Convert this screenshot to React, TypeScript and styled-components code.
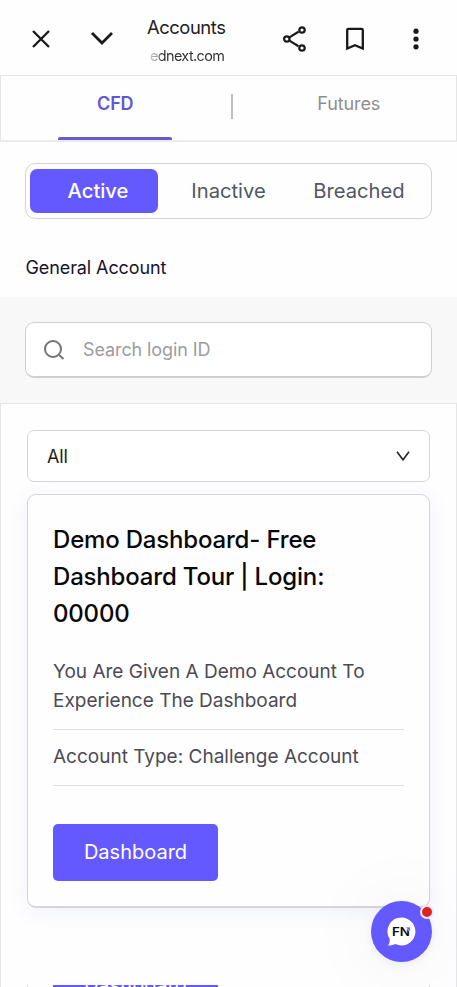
import React from "react";
import styled, { createGlobalStyle } from "styled-components";

const GlobalStyle = createGlobalStyle`
  * { box-sizing: border-box; }
  body {
    margin: 0;
    background: #fff;
    font-family: Inter, "Liberation Sans", sans-serif;
    overflow: hidden;
  }
  button { font-family: inherit; border: 0; padding: 0; background: none; }
`;

const Screen = styled.div`
  position: relative;
  width: 457px;
  height: 987px;
  overflow: hidden;
  display: flex;
  flex-direction: column;
  background: #fefefe;
`;

const BrowserBar = styled.header`
  flex: none;
  height: 75px;
  display: grid;
  grid-template-columns: 81px 41px 144px 57px 64px 58px 12px;
  align-items: center;
`;

const IconButton = styled.button`
  display: flex;
  justify-content: center;
  padding-top: 3px;
`;

const PageInfo = styled.div`
  display: flex;
  flex-direction: column;
  padding-left: 25px;
  white-space: nowrap;
  color: #222226;
`;

const PageTitle = styled.span`
  font-size: 18.4px;
  line-height: 28px;
  margin-top: 7px;
  letter-spacing: -0.45px;
`;

const PageUrl = styled.span`
  align-self: flex-start;
  font-size: 14.4px;
  line-height: 28px;
  margin-top: 1px;
  margin-left: 3px;
  letter-spacing: -0.6px;
  background: linear-gradient(90deg, #c8c8c8 0, #98989a 7px, #303034 12px);
  background-clip: text;
  color: transparent;
`;

const Tabs = styled.nav`
  flex: none;
  height: 67px;
  display: grid;
  grid-template-columns: 1fr 2px 1fr;
  border: 1px solid #e5e5e7;
  border-bottom: 2px solid #ebebed;
`;

const Tab = styled.button<{ $active?: boolean }>`
  display: flex;
  flex-direction: column;
  align-items: center;
  justify-content: space-between;
  font-size: 18px;
  line-height: 24px;
  padding-top: 16px;
  letter-spacing: ${(p) => (p.$active ? "-0.1px" : "-0.1px")};
  padding-left: ${(p) => (p.$active ? "2px" : "12px")};
  font-weight: ${(p) => (p.$active ? 600 : 400)};
  color: ${(p) => (p.$active ? "#6156d6" : "#8e8e90")};
`;

const TabLine = styled.span`
  width: 114px;
  height: 3px;
  border-radius: 2px 2px 0 0;
  background: #685bd0;
`;

const TabDivider = styled.span`
  height: 25px;
  margin: 18px 0 0 3px;
  width: 2px;
  background: #bdbdc0;
`;

const StatusSwitch = styled.div`
  flex: none;
  height: 56px;
  margin: 21px 25px 0;
  padding: 5px 4px;
  display: grid;
  grid-template-columns: 128px 1fr 136px;
  border: 1px solid #d2d2d8;
  border-radius: 10px;
`;

const StatusOption = styled.button<{ $active?: boolean }>`
  font-size: 20.2px;
  line-height: 42px;
  border-radius: 7px;
  padding-left: ${(p) => (p.$active ? "8px" : "0")};
  &:nth-child(2) { padding-left: 8px; }
  font-weight: ${(p) => (p.$active ? 500 : 400)};
  color: ${(p) => (p.$active ? "#fff" : "#54575f")};
  background: ${(p) => (p.$active ? "#6459ff" : "transparent")};
`;

const SectionTitle = styled.h2`
  flex: none;
  margin: 35px 0 0 25.5px;
  height: 43px;
  font-size: 18px;
  line-height: 28px;
  letter-spacing: -0.1px;
  font-weight: 400;
  color: #15142a;
`;

const SearchArea = styled.section`
  flex: none;
  height: 106px;
  padding: 25px 25px 0;
  background: #f8f8f8;
`;

const SearchBox = styled.label`
  height: 56px;
  display: flex;
  align-items: center;
  padding-left: 17px;
  gap: 18px;
  border: 1px solid #cfcfd1;
  border-bottom-width: 2px;
  border-radius: 9px;
  background: #fff;
`;

const SearchInput = styled.input`
  width: 280px;
  padding: 0;
  border: 0;
  outline: 0;
  font: 18px Inter, sans-serif;
  letter-spacing: -0.1px;
  color: #333;
  &::placeholder { color: #9b9ca0; opacity: 1; }
`;

const AccountPanel = styled.main`
  flex: 1;
  min-height: 0;
  display: flex;
  flex-direction: column;
  padding: 26px 26px 0;
  border: 1px solid #e6e6e8;
  border-bottom: 0;
  background: #fefeff;
`;

const Select = styled.button`
  flex: none;
  height: 52px;
  display: flex;
  align-items: center;
  justify-content: space-between;
  padding: 0 19px;
  border: 1px solid #d5d5d8;
  border-radius: 7px;
  font-size: 18px;
  letter-spacing: -0.1px;
  color: #1d1d20;
  background: #fff;
`;

const AccountCard = styled.article`
  flex: none;
  height: 414px;
  margin-top: 12px;
  padding: 25.5px 25px 0;
  border: 1px solid #d6d6d9;
  border-bottom-width: 2px;
  border-radius: 9px;
  background: #fefefe;
  box-shadow: 0 4px 20px rgba(80, 90, 200, 0.08);
`;

const CardTitle = styled.h3`
  margin: 0;
  font-size: 24px;
  line-height: 37px;
  letter-spacing: -0.18px;
  font-weight: 500;
  color: #080809;
`;

const Detail = styled.p`
  margin: 0;
  padding: 12px 0 14px;
  font-size: 19px;
  line-height: 29px;
  white-space: nowrap;
  color: #4b4b55;
  border-bottom: 1px solid #dfdfe2;
`;

const Description = styled(Detail)`
  margin-top: 25.5px;
  padding: 0 0 14px;
`;

const DashboardButton = styled.button`
  flex: none;
  display: block;
  width: 165px;
  height: 57px;
  padding-bottom: 2px;
  border-radius: 5px;
  font-size: 20px;
  color: #fff;
  background: #6459ff;
`;

const CardAction = styled.div`
  margin-top: 38px;
`;

const NextCard = styled.div`
  flex: none;
  height: 2px;
  margin-top: 77px;
  padding-left: 25px;
  display: flex;
  align-items: center;
  overflow: hidden;
  border-left: 1px solid #d6d6d9;
  border-right: 1px solid #d6d6d9;
`;

const ChatButton = styled.button`
  position: absolute;
  left: 370.5px;
  top: 900.5px;
  width: 61px;
  height: 61px;
  border-radius: 50%;
  background: #6459ff;
  box-shadow: 0 2px 8px rgba(0, 0, 0, 0.07), 0 2px 80px rgba(0, 0, 0, 0.07);
`;

const ChatMark = styled.svg`
  display: block;
`;

const UnreadDot = styled.span`
  position: absolute;
  left: 49px;
  top: 4px;
  width: 14px;
  height: 14px;
  border: 2px solid #eeeafc;
  border-radius: 50%;
  background: #df2222;
`;

export default function App() {
  return (
    <>
      <GlobalStyle />
      <Screen>
        <BrowserBar>
          <IconButton aria-label="Close">
            <svg width="20" height="20" viewBox="0 0 20 20" fill="none" stroke="#19191b" strokeWidth="2.3">
              <path d="M2 2 18 18M18 2 2 18" />
            </svg>
          </IconButton>
          <IconButton aria-label="Minimize">
            <svg width="24" height="16" viewBox="0 0 24 16" fill="none" stroke="#19191b" strokeWidth="2.8">
              <path d="m2 2 10 10L22 2" />
            </svg>
          </IconButton>
          <PageInfo>
            <PageTitle>Accounts</PageTitle>
            <PageUrl>ednext.com</PageUrl>
          </PageInfo>
          <IconButton aria-label="Share">
            <svg width="26" height="28" viewBox="0 0 26 28" fill="none" stroke="#19191b" strokeWidth="2.2">
              <path d="m7 12.6 9.5-5.8M7 15.4l9.5 5.8" />
              <circle cx="4.8" cy="14" r="2.7" />
              <circle cx="20" cy="5" r="2.7" />
              <circle cx="20" cy="23" r="2.7" />
            </svg>
          </IconButton>
          <IconButton aria-label="Bookmark">
            <svg width="20" height="24" viewBox="0 0 20 24" fill="none" stroke="#19191b" strokeWidth="2.3">
              <path d="M2.2 21.6V3q0-1.2 1.2-1.2h13.2q1.2 0 1.2 1.2v18.6L10 18.2Z" />
            </svg>
          </IconButton>
          <IconButton aria-label="More">
            <svg width="6" height="22" viewBox="0 0 6 22" fill="#19191b">
              <circle cx="3" cy="3.2" r="2.6" />
              <circle cx="3" cy="11" r="2.6" />
              <circle cx="3" cy="18.8" r="2.6" />
            </svg>
          </IconButton>
        </BrowserBar>

        <Tabs>
          <Tab $active>
            CFD
            <TabLine />
          </Tab>
          <TabDivider />
          <Tab>Futures</Tab>
        </Tabs>

        <StatusSwitch>
          <StatusOption $active>Active</StatusOption>
          <StatusOption>Inactive</StatusOption>
          <StatusOption>Breached</StatusOption>
        </StatusSwitch>

        <SectionTitle>General Account</SectionTitle>

        <SearchArea>
          <SearchBox>
            <svg width="22" height="22" viewBox="0 0 22 22" fill="none" stroke="#737377" strokeWidth="2">
              <circle cx="10" cy="10" r="8" />
              <path d="m15.7 15.7 4.8 4.3" />
            </svg>
            <SearchInput placeholder="Search login ID" />
          </SearchBox>
        </SearchArea>

        <AccountPanel>
          <Select>
            All
            <svg width="14" height="10" viewBox="0 0 14 10" fill="none" stroke="#222224" strokeWidth="1.6">
              <path d="m1 .8 6 8 6-8" />
            </svg>
          </Select>

          <AccountCard>
            <CardTitle>
              Demo Dashboard- Free
              <br />
              Dashboard Tour | Login:
              <br />
              00000
            </CardTitle>
            <Description>
              You Are Given A Demo Account To
              <br />
              Experience The Dashboard
            </Description>
            <Detail>Account Type: Challenge Account</Detail>
            <CardAction>
              <DashboardButton>Dashboard</DashboardButton>
            </CardAction>
          </AccountCard>

          <NextCard>
            <DashboardButton>Dashboard</DashboardButton>
          </NextCard>
        </AccountPanel>

        <ChatButton aria-label="Open chat">
          <ChatMark width="61" height="61" viewBox="0 0 61 61">
            <path fill="#fff" d="M30.5 16.5a14 14 0 1 1-6.2 26.6q-3.8 2-7.3 1.3 2-2.3 1.8-6.2A14 14 0 0 1 30.5 16.5Z" />
            <text x="21" y="35" fontSize="11.5" fontWeight="600" textLength="18" lengthAdjust="spacingAndGlyphs" fill="#09090b">FN</text>
            <path fill="#6459ff" stroke="#fff" strokeWidth=".8" d="M34.4 26h5v5Z" />
          </ChatMark>
          <UnreadDot />
        </ChatButton>
      </Screen>
    </>
  );
}
